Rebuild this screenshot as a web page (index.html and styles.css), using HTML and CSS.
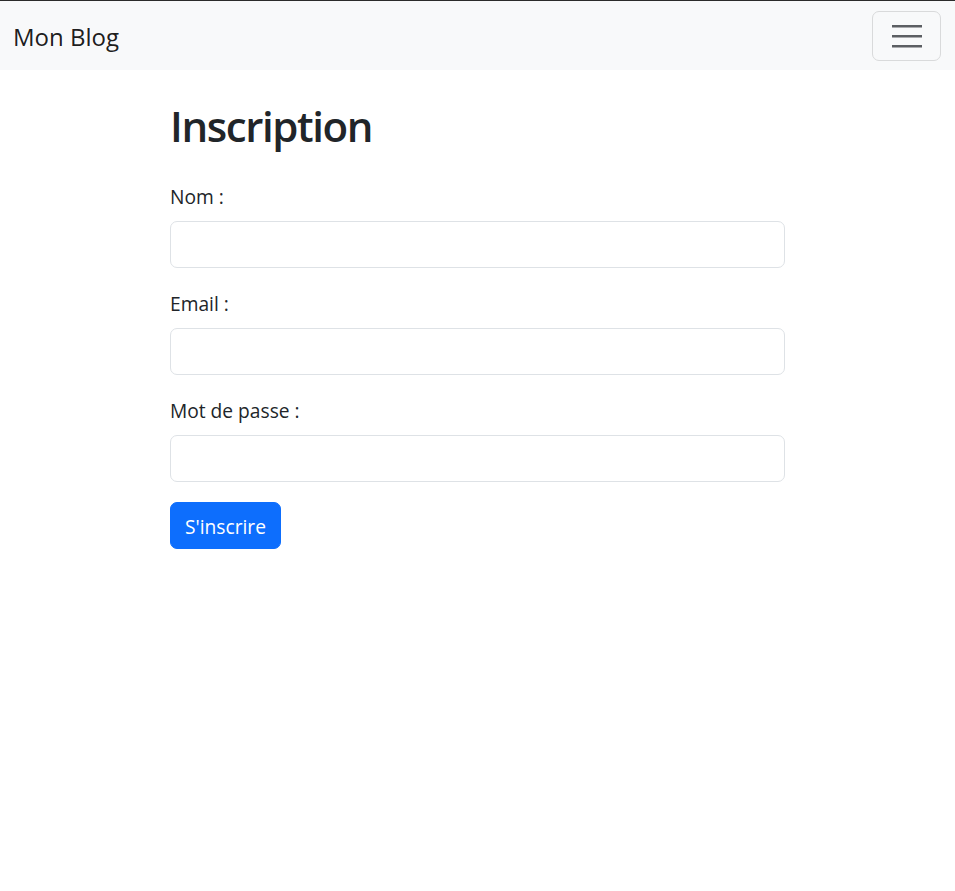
FILE: index.html
```html
<!DOCTYPE html>
<html lang="fr">
<head>
<meta charset="utf-8">
<title>Inscription</title>
<link rel="stylesheet" href="styles.css">
</head>
<body>
<nav class="navbar">
  <a class="brand" href="#">Mon Blog</a>
  <button class="toggler" type="button" aria-label="Menu">
    <svg width="30" height="30" viewBox="0 0 30 30" aria-hidden="true">
      <path d="M0 7.3h30M0 17.3h30M0 27.3h30" stroke="#5c5f63" stroke-width="2.6" fill="none"/>
    </svg>
  </button>
</nav>
<main class="container">
  <h1 class="title">Inscription</h1>
  <form class="form">
    <div class="group">
      <label class="label" for="nom">Nom :</label>
      <input class="input" id="nom" type="text">
    </div>
    <div class="group">
      <label class="label" for="email">Email :</label>
      <input class="input" id="email" type="email">
    </div>
    <div class="group">
      <label class="label" for="pwd">Mot de passe :</label>
      <input class="input" id="pwd" type="password">
    </div>
    <button class="btn" type="submit">S'inscrire</button>
  </form>
</main>
</body>
</html>
```
FILE: styles.css
```css
* { box-sizing: border-box; }
html, body { margin: 0; padding: 0; }
body {
  font-family: "Open Sans", "Noto Sans", sans-serif;
  font-size: 19.2px;
  line-height: 1.5;
  color: #212529;
  background: #fff;
  border-top: 1px solid #2b2b2b;
}
.navbar {
  height: 69px;
  background: #f8f9fa;
  display: flex;
  align-items: center;
  justify-content: space-between;
  padding: 0 14px 0 13px;
}
.brand {
  font-size: 24px;
  color: rgba(0,0,0,.9);
  text-decoration: none;
  line-height: 1.2;
  margin-top: 3px;
}
.toggler {
  width: 69px;
  height: 50px;
  margin-top: 1px;
  border: 1px solid #d9dadb;
  border-radius: 7px;
  background: transparent;
  display: flex;
  align-items: center;
  justify-content: center;
  padding: 0 0 5px;
}
.container {
  width: 615px;
  margin: 0 auto;
  padding-top: 31px;
}
.title {
  font-size: 42px;
  font-weight: 600;
  letter-spacing: -1.4px;
  line-height: 1.2;
  margin: 0 0 31px;
}
.group { margin-bottom: 21px; }
.group:last-of-type { margin-bottom: 20px; }
.label {
  display: block;
  margin-bottom: 10px;
  line-height: 29px;
}
.input {
  display: block;
  width: 100%;
  height: 47px;
  border: 1px solid #dee2e6;
  border-radius: 7px;
  background: #fff;
  font: inherit;
  padding: 7px 14px;
}
.btn {
  font: inherit;
  color: #fff;
  background: #0d6efd;
  border: 1px solid #0d6efd;
  border-radius: 7px;
  height: 47px;
  padding: 3px 14px 0;
}
```
